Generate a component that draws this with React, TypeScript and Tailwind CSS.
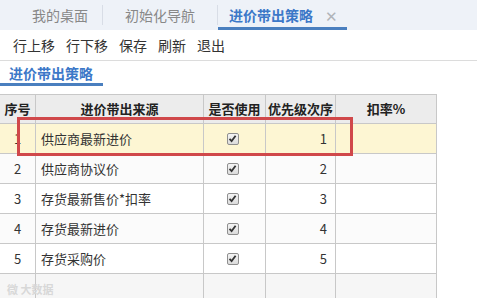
import React from "react";

const rows = [
  { n: "1", name: "供应商最新进价", p: "1" },
  { n: "2", name: "供应商协议价", p: "2" },
  { n: "3", name: "存货最新售价*扣率", p: "3" },
  { n: "4", name: "存货最新进价", p: "4" },
  { n: "5", name: "存货采购价", p: "5" },
];

function Check() {
  return (
    <span className="inline-flex w-[12px] h-[12px] items-center justify-center rounded-[2px] border border-[#8f8f8f] bg-gradient-to-b from-[#f4f4f4] to-[#dcdcdc]">
      <svg width="9" height="9" viewBox="0 0 9 9">
        <path d="M1.5 4.8 L3.6 7 L7.6 1.8" fill="none" stroke="#333" strokeWidth="1.8" />
      </svg>
    </span>
  );
}

export default function App() {
  const font = { fontFamily: '"Noto Sans CJK SC", "Noto Sans", sans-serif' };
  return (
    <div className="w-[477px] h-[298px] overflow-hidden bg-white relative text-[#333]" style={font}>
      {/* tab bar */}
      <div className="h-[30px] bg-[#eef2f8] flex items-end text-[14px]">
        <div className="w-[102px] h-[30px] flex items-center justify-center text-[#888] pl-[18px]">我的桌面</div>
        <div className="w-px h-[20px] bg-[#d8dde6] self-center"></div>
        <div className="w-[114px] h-[30px] flex items-center justify-center text-[#888]">初始化导航</div>
        <div className="w-px h-[20px] bg-[#d8dde6] self-center"></div>
        <div className="w-[129px] h-[30px] flex items-center pl-[11px] gap-[12px] border-b-[3px] border-[#4a7fbf] pt-[3px]">
          <span className="text-[#3c78c8] font-bold">进价带出策略</span>
          <span className="text-[#b0b4ba] text-[15px] leading-none">✕</span>
        </div>
      </div>
      {/* toolbar */}
      <div className="h-[31px] border-b border-[#dcdcdc] flex items-center gap-[11px] pl-[13px] text-[14px] text-[#333]">
        <span>行上移</span>
        <span>行下移</span>
        <span>保存</span>
        <span>刷新</span>
        <span>退出</span>
      </div>
      {/* sub tab */}
      <div className="h-[33px] pt-[3px]">
        <div className="w-[103px] h-[22px] border-b-[3px] border-[#4a7fbf] pl-[9px] text-[14px] font-bold text-[#3c78c8] leading-[18px]">
          进价带出策略
        </div>
      </div>
      {/* table */}
      <div className="w-[437px] border-t border-r border-[#c8c8c8] text-[13px]">
        <div className="flex h-[29px] bg-[#ececec] font-bold text-[#222] border-b border-[#c8c8c8]">
          <div className="w-[36px] flex items-center justify-center border-r border-[#c8c8c8]">序号</div>
          <div className="w-[168px] flex items-center justify-center border-r border-[#c8c8c8]">进价带出来源</div>
          <div className="w-[62px] flex items-center justify-center border-r border-[#c8c8c8]">是否使用</div>
          <div className="w-[70px] flex items-center justify-center border-r border-[#c8c8c8]">优先级次序</div>
          <div className="flex-1 flex items-center justify-center">扣率%</div>
        </div>
        {rows.map((r, i) => (
          <div
            key={r.n}
            className={
              "flex h-[30px] border-b border-[#c8c8c8] " +
              (i === 0 ? "bg-[#fdf6d3]" : i % 2 === 1 ? "bg-[#fbfbfb]" : "bg-white")
            }
          >
            <div className="w-[36px] flex items-center justify-center border-r border-[#c8c8c8]">{r.n}</div>
            <div className="w-[168px] flex items-center pl-[5px] border-r border-[#c8c8c8]">{r.name}</div>
            <div className="w-[62px] flex items-center justify-center border-r border-[#c8c8c8] pr-[4px]"><Check /></div>
            <div className="w-[70px] flex items-center justify-end pr-[8px] border-r border-[#c8c8c8]">{r.p}</div>
            <div className="flex-1"></div>
          </div>
        ))}
        <div className="flex h-[30px] bg-[#f6f6f6]">
          <div className="w-[36px] border-r border-[#c8c8c8]"></div>
          <div className="w-[168px] border-r border-[#c8c8c8]"></div>
          <div className="w-[62px] border-r border-[#c8c8c8]"></div>
          <div className="w-[70px] border-r border-[#c8c8c8]"></div>
          <div className="flex-1"></div>
        </div>
      </div>
      {/* red highlight box */}
      <div className="absolute left-[17px] top-[117px] w-[336px] h-[39px] border-[3px] border-[#d0484a]"></div>
      {/* watermark */}
      <div className="absolute left-[7px] top-[281px] text-[11px] text-[#d8d8d8] font-bold">微 大数据</div>
    </div>
  );
}
